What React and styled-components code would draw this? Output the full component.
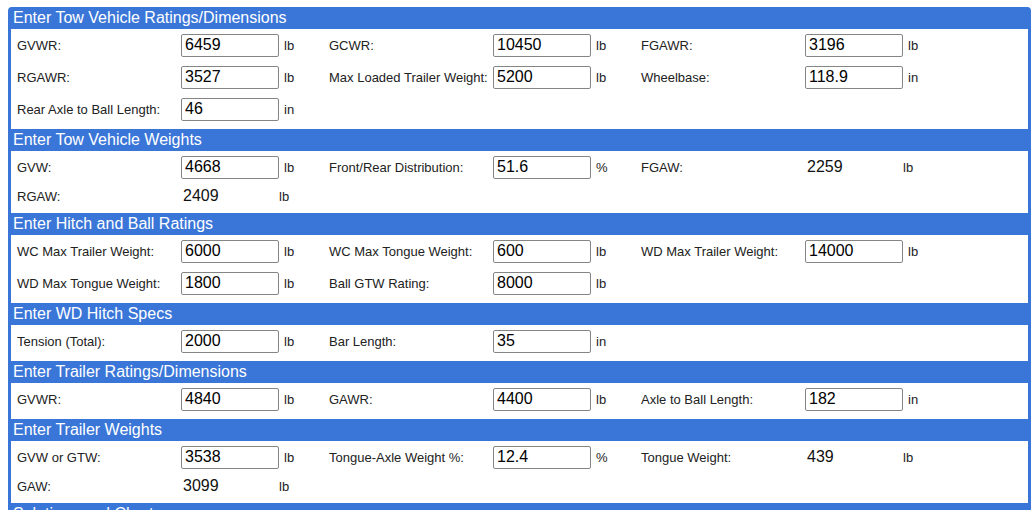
import React from "react";
import styled, { createGlobalStyle } from "styled-components";

const GlobalStyle = createGlobalStyle`
  body {
    margin: 7px 0 0 8px;
    background: #fff;
    font-family: "Liberation Sans", Arial, sans-serif;
    overflow: hidden;
  }
`;

const Panel = styled.div`
  width: 1017px;
  border: 3px solid #3a76d8;
  border-top: none;
  border-radius: 4px 4px 0 0;
  background: #3a76d8;
  overflow: hidden;
`;

const Header = styled.div`
  height: 22px;
  line-height: 22px;
  padding-left: 2px;
  color: #fff;
  font-size: 16px;
  background: #3a76d8;
`;

const Body = styled.div`
  background: #fff;
  padding: 0 0 4px 6px;
`;

const Row = styled.div`
  display: grid;
  grid-template-columns: repeat(3, 164px 148px);
  align-items: center;
  height: ${(p) => (p.$short ? "26px" : "32px")};
`;

const Label = styled.div`
  font-size: 13px;
  color: #222;
  white-space: nowrap;
`;

const Cell = styled.div`
  display: flex;
  align-items: center;
`;

const Input = styled.input`
  box-sizing: border-box;
  width: 98px;
  height: 23px;
  margin: 0;
  padding: 0 3px;
  border: 1px solid #858585;
  border-radius: 2px;
  font-family: "Liberation Sans", Arial, sans-serif;
  font-size: 16px;
  color: #000;
  background: #fff;
  outline: none;
`;

const Value = styled.span`
  width: 96px;
  padding-left: 2px;
  font-size: 16px;
  color: #111;
`;

const Unit = styled.span`
  margin-left: ${(p) => (p.$computed ? "0" : "5px")};
  font-size: 13px;
  color: #222;
`;

const sections = [
  {
    title: "Enter Tow Vehicle Ratings/Dimensions",
    rows: [
      [
        ["GVWR:", "6459", "lb"],
        ["GCWR:", "10450", "lb"],
        ["FGAWR:", "3196", "lb"],
      ],
      [
        ["RGAWR:", "3527", "lb"],
        ["Max Loaded Trailer Weight:", "5200", "lb"],
        ["Wheelbase:", "118.9", "in"],
      ],
      [["Rear Axle to Ball Length:", "46", "in"]],
    ],
  },
  {
    title: "Enter Tow Vehicle Weights",
    rows: [
      [
        ["GVW:", "4668", "lb"],
        ["Front/Rear Distribution:", "51.6", "%"],
        ["FGAW:", "2259", "lb", true],
      ],
      [["RGAW:", "2409", "lb", true]],
    ],
  },
  {
    title: "Enter Hitch and Ball Ratings",
    rows: [
      [
        ["WC Max Trailer Weight:", "6000", "lb"],
        ["WC Max Tongue Weight:", "600", "lb"],
        ["WD Max Trailer Weight:", "14000", "lb"],
      ],
      [
        ["WD Max Tongue Weight:", "1800", "lb"],
        ["Ball GTW Rating:", "8000", "lb"],
      ],
    ],
  },
  {
    title: "Enter WD Hitch Specs",
    rows: [
      [
        ["Tension (Total):", "2000", "lb"],
        ["Bar Length:", "35", "in"],
      ],
    ],
  },
  {
    title: "Enter Trailer Ratings/Dimensions",
    rows: [
      [
        ["GVWR:", "4840", "lb"],
        ["GAWR:", "4400", "lb"],
        ["Axle to Ball Length:", "182", "in"],
      ],
    ],
  },
  {
    title: "Enter Trailer Weights",
    rows: [
      [
        ["GVW or GTW:", "3538", "lb"],
        ["Tongue-Axle Weight %:", "12.4", "%"],
        ["Tongue Weight:", "439", "lb", true],
      ],
      [["GAW:", "3099", "lb", true]],
    ],
  },
];

const Field = ({ label, value, unit, computed }) => (
  <>
    <Label>{label}</Label>
    <Cell>
      {computed ? <Value>{value}</Value> : <Input defaultValue={value} />}
      <Unit $computed={computed}>{unit}</Unit>
    </Cell>
  </>
);

export default function App() {
  return (
    <>
      <GlobalStyle />
      <Panel>
        {sections.map((s) => (
          <React.Fragment key={s.title}>
            <Header>{s.title}</Header>
            <Body>
              {s.rows.map((row, i) => (
                <Row key={i} $short={row.every((f) => f[3])}>
                  {row.map(([label, value, unit, computed]) => (
                    <Field
                      key={label}
                      label={label}
                      value={value}
                      unit={unit}
                      computed={computed}
                    />
                  ))}
                </Row>
              ))}
            </Body>
          </React.Fragment>
        ))}
        <Header>Solutions and Charts</Header>
      </Panel>
    </>
  );
}
